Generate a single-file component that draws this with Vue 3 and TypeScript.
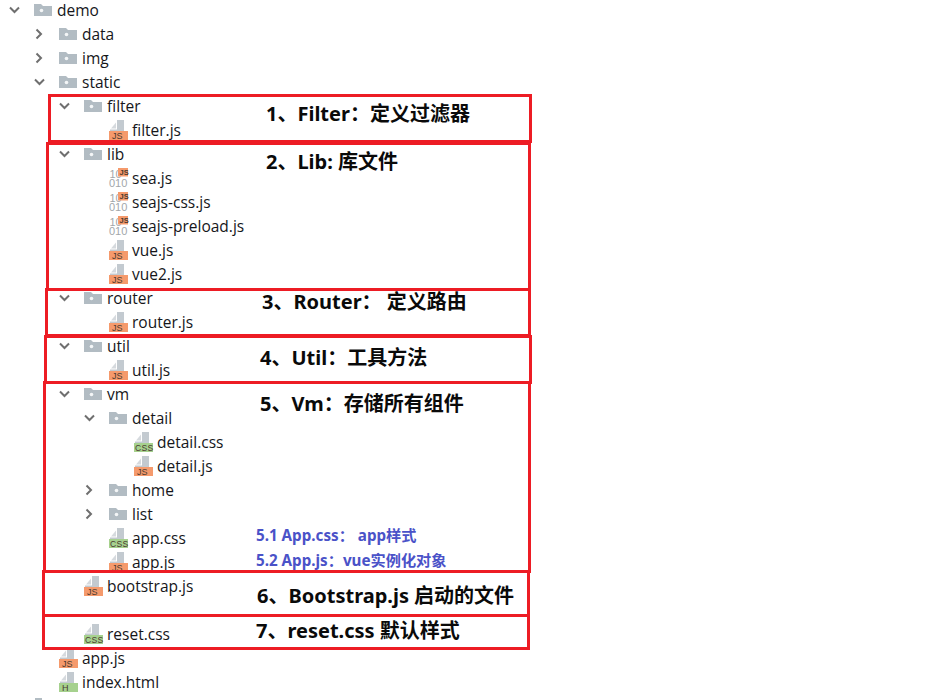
<script setup lang="ts">
type Kind = 'open' | 'closed' | 'js' | 'css' | 'html' | 'bin' | 'plain' | 'stub'
interface Row { name: string; level: number; kind: Kind }

const rows: Row[] = [
  { name: 'demo', level: 0, kind: 'open' },
  { name: 'data', level: 1, kind: 'closed' },
  { name: 'img', level: 1, kind: 'closed' },
  { name: 'static', level: 1, kind: 'open' },
  { name: 'filter', level: 2, kind: 'open' },
  { name: 'filter.js', level: 3, kind: 'js' },
  { name: 'lib', level: 2, kind: 'open' },
  { name: 'sea.js', level: 3, kind: 'bin' },
  { name: 'seajs-css.js', level: 3, kind: 'bin' },
  { name: 'seajs-preload.js', level: 3, kind: 'bin' },
  { name: 'vue.js', level: 3, kind: 'js' },
  { name: 'vue2.js', level: 3, kind: 'js' },
  { name: 'router', level: 2, kind: 'open' },
  { name: 'router.js', level: 3, kind: 'js' },
  { name: 'util', level: 2, kind: 'open' },
  { name: 'util.js', level: 3, kind: 'js' },
  { name: 'vm', level: 2, kind: 'open' },
  { name: 'detail', level: 3, kind: 'open' },
  { name: 'detail.css', level: 4, kind: 'css' },
  { name: 'detail.js', level: 4, kind: 'js' },
  { name: 'home', level: 3, kind: 'closed' },
  { name: 'list', level: 3, kind: 'closed' },
  { name: 'app.css', level: 3, kind: 'css' },
  { name: 'app.js', level: 3, kind: 'js' },
  { name: 'bootstrap.js', level: 2, kind: 'js' },
  { name: '', level: 2, kind: 'plain' },
  { name: 'reset.css', level: 2, kind: 'css' },
  { name: 'app.js', level: 1, kind: 'js' },
  { name: 'index.html', level: 1, kind: 'html' },
  { name: '', level: 0, kind: 'stub' },
]

const isFolder = (k: Kind) => k === 'open' || k === 'closed'
const isDoc = (k: Kind) => k === 'js' || k === 'css' || k === 'html'
const bannerColor = (k: Kind) => (k === 'js' ? '#f59a6c' : '#a6d18e')
const bannerText = (k: Kind) => (k === 'js' ? 'JS' : k === 'css' ? 'CSS' : 'H')

const boxes = [
  { x: 48, y: 94, w: 484, h: 49 },
  { x: 46, y: 142, w: 485, h: 149 },
  { x: 45, y: 288, w: 486, h: 49 },
  { x: 44, y: 335, w: 488, h: 49 },
  { x: 43, y: 381, w: 488, h: 192 },
  { x: 42, y: 570, w: 488, h: 47 },
  { x: 42, y: 614, w: 488, h: 36 },
]

const notes = [
  { text: '1、Filter：定义过滤器', x: 266, y: 114, sub: false },
  { text: '2、Lib: 库文件', x: 266, y: 162, sub: false },
  { text: '3、Router： 定义路由', x: 262, y: 302, sub: false },
  { text: '4、Util：工具方法', x: 260, y: 358, sub: false },
  { text: '5、Vm：存储所有组件', x: 260, y: 404, sub: false },
  { text: '5.1 App.css： app样式', x: 256, y: 535, sub: true },
  { text: '5.2 App.js：vue实例化对象', x: 256, y: 560, sub: true },
  { text: '6、Bootstrap.js 启动的文件', x: 257, y: 596, sub: false },
  { text: '7、reset.css 默认样式', x: 256, y: 631, sub: false },
]
</script>

<template>
  <div class="page">
    <ul class="tree">
      <li
        v-for="(row, i) in rows"
        :key="i"
        class="row"
        :style="{ paddingLeft: 7 + row.level * 25 + 'px' }"
      >
        <span class="arrow">
          <svg v-if="row.kind === 'open'" width="14" height="24" viewBox="0 0 14 24">
            <path d="M3 9.5 L7.5 14 L12 9.5" class="chev" />
          </svg>
          <svg v-else-if="row.kind === 'closed'" width="14" height="24" viewBox="0 0 14 24">
            <path d="M4.5 7.5 L9 12 L4.5 16.5" class="chev" />
          </svg>
        </span>
        <svg class="icon" width="22" height="24" viewBox="0 0 22 24">
          <template v-if="isFolder(row.kind)">
            <path d="M1 6 H8 L10 8 H19 V18 H1 Z" fill="#b2bcc3" />
            <circle cx="8.5" cy="12.5" r="1.8" fill="#f4f6f7" />
          </template>
          <template v-else-if="isDoc(row.kind)">
            <path d="M9 2 H16 V13 H2 V11.5 H9 Z" fill="#c3cad0" />
            <path d="M3 10.5 L8 4.5 V10.5 Z" fill="#d6dade" />
            <rect x="1" y="13" width="19" height="9" :fill="bannerColor(row.kind)" />
            <text
              :x="row.kind === 'css' ? 2 : 4"
              y="21"
              class="tag"
              :class="{ wide: row.kind === 'css' }"
            >{{ bannerText(row.kind) }}</text>
          </template>
          <template v-else-if="row.kind === 'bin'">
            <text x="1.5" y="12" class="bits">10</text>
            <text x="1" y="21" class="bits">010</text>
            <rect x="10" y="2" width="10" height="8.5" fill="#f59a6c" />
            <text x="11.5" y="9" class="tag small">JS</text>
          </template>
          <rect v-else-if="row.kind === 'stub'" x="2" y="4" width="7" height="4" fill="#b2bcc3" />
        </svg>
        <span class="name">{{ row.name }}</span>
      </li>
    </ul>

    <div
      v-for="(b, i) in boxes"
      :key="'b' + i"
      class="box"
      :style="{ left: b.x + 'px', top: b.y + 'px', width: b.w + 'px', height: b.h + 'px' }"
    ></div>

    <div
      v-for="(n, i) in notes"
      :key="'n' + i"
      class="note"
      :class="{ sub: n.sub }"
      :style="{ left: n.x + 'px', top: n.y + 'px' }"
    >{{ n.text }}</div>
  </div>
</template>

<style>
html, body { margin: 0; background: #fff; }
</style>

<style scoped>
.page {
  position: relative;
  width: 929px;
  height: 700px;
  overflow: hidden;
  background: #fff;
}
.tree {
  list-style: none;
  margin: -2px 0 0;
  padding: 0;
}
.row {
  display: flex;
  align-items: center;
  height: 24px;
  font-family: "Open Sans", "Noto Sans", sans-serif;
  font-size: 15.5px;
  color: #15161a;
  white-space: nowrap;
}
.arrow {
  display: block;
  flex: none;
  width: 26px;
  height: 24px;
}
.icon {
  display: block;
  flex: none;
  margin-right: 2px;
}
.chev {
  fill: none;
  stroke: #6f6f6f;
  stroke-width: 2;
}
.tag {
  font-family: "Liberation Sans", sans-serif;
  font-size: 9px;
  fill: #4a3a30;
}
.tag.wide {
  font-size: 8.5px;
  letter-spacing: 0.4px;
}
.tag.small {
  font-size: 7.5px;
  font-weight: 700;
}
.bits {
  font-family: "Liberation Sans", sans-serif;
  font-size: 11px;
  fill: #a2a7ab;
}
.box {
  position: absolute;
  box-sizing: border-box;
  border: 3px solid #ed1c24;
}
.note {
  position: absolute;
  transform: translateY(-50%);
  font-family: "Noto Sans", "Noto Sans CJK SC", sans-serif;
  font-size: 20px;
  font-weight: 700;
  line-height: 28px;
  color: #0a0a0a;
  white-space: pre;
}
.note.sub {
  font-size: 15.2px;
  line-height: 20px;
  color: #4a52c8;
}
</style>
